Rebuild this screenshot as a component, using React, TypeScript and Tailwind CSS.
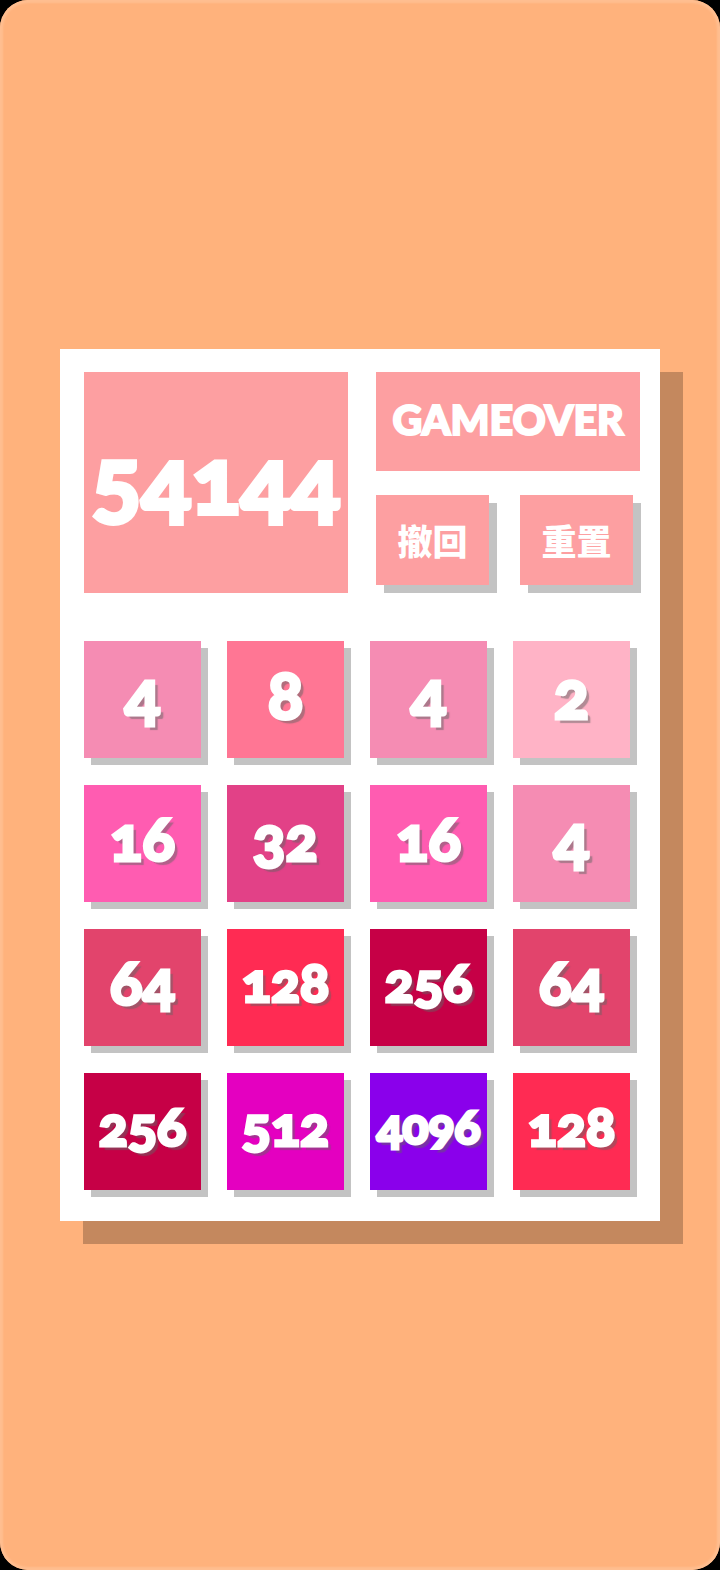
type TileStyle = { bg: string; text: string };

const tileStyles: Record<number, TileStyle> = {
  2: { bg: 'bg-[#ffb3c6]', text: 'text-[66px]' },
  4: { bg: 'bg-[#f58cb3]', text: 'text-[66px]' },
  8: { bg: 'bg-[#ff7694]', text: 'text-[66px]' },
  16: { bg: 'bg-[#ff5cb1]', text: 'text-[60px]' },
  32: { bg: 'bg-[#e24187]', text: 'text-[60px]' },
  64: { bg: 'bg-[#e2446c]', text: 'text-[60px]' },
  128: { bg: 'bg-[#ff2b53]', text: 'text-[54px]' },
  256: { bg: 'bg-[#c60046]', text: 'text-[54px]' },
  512: { bg: 'bg-[#e400c0]', text: 'text-[54px]' },
  4096: { bg: 'bg-[#8a00eb]', text: 'text-[48px]' },
};

const board = [
  [4, 8, 4, 2],
  [16, 32, 16, 4],
  [64, 128, 256, 64],
  [256, 512, 4096, 128],
];

const digits =
  "font-['Lato',sans-serif] font-black leading-none [font-variant-numeric:oldstyle-nums]";

function Tile({ value }: { value: number }) {
  const { bg, text } = tileStyles[value];
  return (
    <div
      className={`flex h-[117px] items-center justify-center pb-3 shadow-[7px_7px_0_#c3c3c3] ${bg}`}
    >
      <span
        className={`${digits} ${text} text-white [-webkit-text-stroke:3px_white] [text-shadow:4px_4px_1px_rgba(100,100,100,0.5)]`}
      >
        {value}
      </span>
    </div>
  );
}

function ActionButton({ label }: { label: string }) {
  return (
    <button
      type="button"
      className="h-[90px] bg-[#fd9fa1] pb-px font-['Noto_Sans_CJK_SC',sans-serif] text-[35px] leading-none font-black text-white shadow-[8px_8px_0_#c3c3c3]"
    >
      {label}
    </button>
  );
}

export default function App() {
  return (
    <div className="min-h-screen bg-black">
      <main className="flex min-h-screen items-center rounded-[28px] bg-[#ffb27c] px-[60px] shadow-[inset_0_0_2px_3px_#ffbe90]">
        <section className="w-full bg-white pt-[23px] pr-5 pb-[31px] pl-6 shadow-[23px_23px_0_#c4885e]">
          <header className="grid grid-cols-2 gap-7">
            <div className="flex items-center justify-center bg-[#fd9fa1] pb-2">
              <output
                aria-label="Score"
                className={`${digits} text-[92px] text-white [-webkit-text-stroke:4px_white]`}
              >
                54144
              </output>
            </div>
            <div className="flex flex-col gap-6 pb-2">
              <h1 className="flex h-[99px] items-center justify-center bg-[#fd9fa1] pb-1 font-['Lato',sans-serif] text-[41px] leading-none font-black text-white [-webkit-text-stroke:2px_white]">
                GAMEOVER
              </h1>
              <div className="grid grid-cols-2 gap-[31px] pr-[7px]">
                <ActionButton label="撤回" />
                <ActionButton label="重置" />
              </div>
            </div>
          </header>
          <div className="mt-12 grid grid-cols-4 gap-x-[26px] gap-y-[27px] pr-[10px]">
            {board.flat().map((value, i) => (
              <Tile key={i} value={value} />
            ))}
          </div>
        </section>
      </main>
    </div>
  );
}
